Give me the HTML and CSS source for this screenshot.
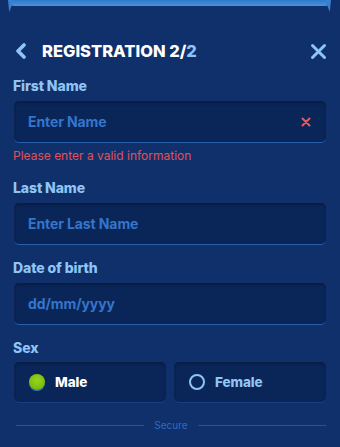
FILE: index.html
```html
<!DOCTYPE html>
<html>
<head>
<meta charset="utf-8">
<link rel="stylesheet" href="styles.css">
</head>
<body>
<div class="page">
  <div class="topbar">
    <span class="notch notch-l"></span>
    <span class="notch notch-r"></span>
  </div>
  <header class="header">
    <svg class="back" width="12" height="16" viewBox="0 0 12 16"><path d="M9 2 L3 8 L9 14" fill="none" stroke="#8ec5f5" stroke-width="3.6" stroke-linecap="round" stroke-linejoin="round"/></svg>
    <h1 class="title">REGISTRATION 2/<span class="hl">2</span></h1>
    <svg class="close" width="17" height="17" viewBox="0 0 17 17"><path d="M2.5 2.5 L14.5 14.5 M14.5 2.5 L2.5 14.5" fill="none" stroke="#8ec5f5" stroke-width="3" stroke-linecap="round"/></svg>
  </header>

  <form class="form">
    <div class="field">
      <label class="label">First Name</label>
      <div class="input">
        <span class="ph">Enter Name</span>
        <svg class="err-x" width="10" height="10" viewBox="0 0 10 10"><path d="M1.5 1.5 L8.5 8.5 M8.5 1.5 L1.5 8.5" stroke="#e8585c" stroke-width="2" stroke-linecap="round"/></svg>
      </div>
      <div class="error">Please enter a valid information</div>
    </div>
    <div class="field">
      <label class="label">Last Name</label>
      <div class="input"><span class="ph">Enter Last Name</span></div>
    </div>
    <div class="field">
      <label class="label">Date of birth</label>
      <div class="input"><span class="ph">dd/mm/yyyy</span></div>
    </div>
    <div class="field last">
      <label class="label">Sex</label>
      <div class="radios">
        <div class="radio on"><span class="dot"></span><span class="rtext">Male</span></div>
        <div class="radio"><span class="dot"></span><span class="rtext">Female</span></div>
      </div>
    </div>
  </form>

  <div class="secure"><span class="line"></span><span class="stext">Secure</span><span class="line"></span></div>
</div>
</body>
</html>
```

FILE: styles.css
```css
* { box-sizing: border-box; }
html, body { margin: 0; padding: 0; }
body {
  background: #10306b;
  font-family: Inter, "Noto Sans", sans-serif;
  width: 340px;
  height: 447px;
  overflow: hidden;
}
.page { position: relative; padding: 0 14px 0 13px; }
.topbar {
  position: relative;
  margin: 0 -3px 0 -3px;
  height: 6px;
  background: linear-gradient(#2f78cc, #4a92dc);
  border-radius: 0 0 4px 4px;
}
.notch {
  position: absolute;
  top: 0;
  width: 6px;
  height: 12px;
  background: #3a80d0;
}
.notch-l { left: -2px; clip-path: polygon(0 0, 100% 0, 20% 100%); }
.notch-r { right: -2px; clip-path: polygon(0 0, 100% 0, 80% 100%); }
.header {
  display: flex;
  align-items: center;
  height: 30px;
  margin-top: 30px;
  padding-left: 2px;
}
.back { margin-right: 15px; }
.title {
  flex: 1;
  margin: 0;
  font-size: 16.5px;
  font-weight: 800;
  color: #ffffff;
  letter-spacing: 0;
}
.hl { color: #8ec5f5; }
.close { margin-right: -1px; }
.form { display: flex; flex-direction: column; margin-top: 12px; }
.field { display: flex; flex-direction: column; margin-bottom: 15px; }
.label {
  font-size: 14px;
  font-weight: 800;
  color: #8ec5f5;
  line-height: 16px;
  margin-bottom: 7px;
  letter-spacing: -0.1px;
}
.field.last .label { margin-bottom: 6px; }
.input {
  display: flex;
  align-items: center;
  height: 42px;
  margin-left: 1px;
  padding: 0 14px;
  background: #0a2658;
  border-radius: 5px;
  border-bottom: 1.5px solid #2a5fae;
  box-shadow: inset 0 2px 3px rgba(0,0,0,0.25);
}
.ph {
  flex: 1;
  font-size: 14px;
  font-weight: 700;
  color: #3575cc;
  letter-spacing: -0.1px;
}
.err-x { margin-right: 1px; }
.error {
  margin-top: 6px;
  font-size: 12px;
  color: #e0505a;
  line-height: 14px;
  margin-bottom: 2px;
}
.radios { display: flex; gap: 8px; margin-left: 1px; }
.radio {
  flex: 1;
  display: flex;
  align-items: center;
  height: 40px;
  padding-left: 15px;
  background: #0a2658;
  border-radius: 5px;
  box-shadow: inset 0 2px 3px rgba(0,0,0,0.25), 0 1px 0 #17407f;
}
.dot {
  width: 16px;
  height: 16px;
  border-radius: 50%;
  border: 2px solid #8ec5f5;
  margin-right: 10px;
}
.radio.on .dot {
  border: none;
  background: radial-gradient(circle at 50% 40%, #9ad41a 0, #7cbf10 60%, #5a9a0c 100%);
  box-shadow: 0 1px 0 #3a78d0;
}
.rtext {
  font-size: 13.5px;
  font-weight: 800;
  color: #8ec5f5;
  letter-spacing: -0.1px;
}
.radio.on .rtext { color: #ffffff; }
.secure {
  display: flex;
  align-items: center;
  gap: 10px;
  margin-top: 2px;
  padding: 0 0 0 3px;
}
.line { flex: 1; height: 1px; background: #2452a0; }
.stext { font-size: 10px; color: #2f6bc0; }
```
